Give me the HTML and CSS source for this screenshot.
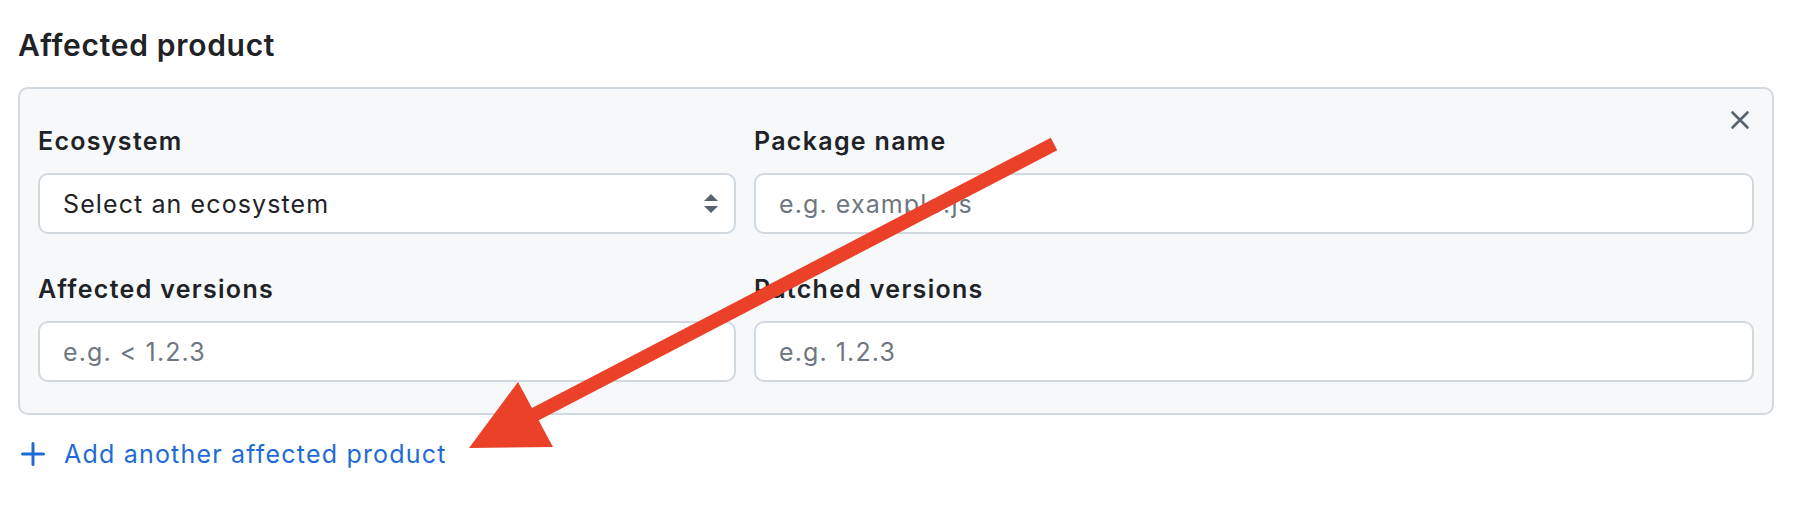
FILE: index.html
```html
<!DOCTYPE html>
<html lang="en">
<head>
  <meta charset="UTF-8">
  <meta name="viewport" content="width=device-width, initial-scale=1.0">
  <title>Affected product</title>
  <link rel="stylesheet" href="styles.css">
</head>
<body>
  <div class="page">
    <h2 class="section-title">Affected product</h2>

    <div class="product-card">
      <button class="remove-btn" aria-label="Remove affected product">
        <svg width="18" height="18" viewBox="0 0 18 18">
          <path d="M1.5 1.5 L16.5 16.5 M16.5 1.5 L1.5 16.5" stroke="#59636e" stroke-width="2.6" stroke-linecap="round" fill="none"/>
        </svg>
      </button>

      <div class="fields">
        <div class="field">
          <label for="ecosystem">Ecosystem</label>
          <div class="select-wrap">
            <select id="ecosystem" class="form-control">
              <option>Select an ecosystem</option>
              <option>npm</option>
              <option>pip</option>
              <option>Maven</option>
            </select>
            <svg class="select-arrows" width="14" height="20" viewBox="0 0 14 20">
              <path d="M7 0 L14 7 L0 7 Z M0 12 L14 12 L7 19 Z" fill="#59636e"/>
            </svg>
          </div>
        </div>

        <div class="field">
          <label for="package">Package name</label>
          <input type="text" id="package" class="form-control" placeholder="e.g. example.js">
        </div>

        <div class="field">
          <label for="affected">Affected versions</label>
          <input type="text" id="affected" class="form-control" placeholder="e.g. &lt; 1.2.3">
        </div>

        <div class="field">
          <label for="patched">Patched versions</label>
          <input type="text" id="patched" class="form-control" placeholder="e.g. 1.2.3">
        </div>
      </div>
    </div>

    <a class="add-link" href="#">
      <svg width="24" height="24" viewBox="0 0 24 24">
        <path d="M12 1.5 V22.5 M1.5 12 H22.5" stroke="currentColor" stroke-width="3" stroke-linecap="round" fill="none"/>
      </svg>
      Add another affected product
    </a>
  </div>

  <!-- annotation drawn over the form -->
  <svg class="annotation" width="1794" height="510" viewBox="0 0 1794 510">
    <line x1="1054" y1="144" x2="528" y2="418" stroke="#ea4128" stroke-width="14"/>
    <polygon points="518,382 469,448 553,447" fill="#ea4128"/>
  </svg>
</body>
</html>
```

FILE: styles.css
```css
body {
  margin: 0;
  font-family: Inter, "Noto Sans", sans-serif;
  color: #1f2328;
  background-color: #ffffff;
  position: relative;
}

.page {
  padding: 23px 20px 0 18px;
}

.section-title {
  margin: 0;
  font-size: 30px;
  font-weight: 600;
  line-height: 45px;
  letter-spacing: 0.7px;
}

.product-card {
  position: relative;
  box-sizing: border-box;
  width: 1756px;
  margin-top: 19px;
  padding: 34px 18px 31px;
  background-color: #f6f8fa;
  border: 2px solid #d1d9e0;
  border-radius: 10px;
}

.remove-btn {
  position: absolute;
  top: 22px;
  right: 23px;
  width: 18px;
  height: 18px;
  padding: 0;
  border: none;
  background: none;
  cursor: pointer;
}

.remove-btn svg {
  display: block;
}

.fields {
  display: grid;
  grid-template-columns: 698px 1fr;
  column-gap: 18px;
  row-gap: 37px;
}

.field label {
  display: block;
  font-size: 25px;
  font-weight: 600;
  line-height: 36px;
  letter-spacing: 1.3px;
  margin-bottom: 14px;
}

.form-control {
  display: block;
  width: 100%;
  height: 61px;
  box-sizing: border-box;
  padding: 0 23px;
  font-family: Inter, "Noto Sans", sans-serif;
  font-size: 25px;
  letter-spacing: 1.1px;
  color: #1f2328;
  background-color: #ffffff;
  border: 2px solid #d1d9e0;
  border-radius: 10px;
  outline: none;
}

.form-control::placeholder {
  color: #6e7781;
}

select.form-control {
  appearance: none;
  -webkit-appearance: none;
}

.select-wrap {
  position: relative;
}

.select-arrows {
  position: absolute;
  right: 18px;
  top: 21px;
  pointer-events: none;
}

.add-link {
  display: inline-flex;
  align-items: center;
  gap: 19px;
  margin-top: 21px;
  margin-left: 3px;
  font-size: 25px;
  line-height: 36px;
  letter-spacing: 1.2px;
  color: #1f6bd6;
  text-decoration: none;
}

.add-link svg {
  display: block;
}

.annotation {
  position: absolute;
  top: 0;
  left: 0;
  pointer-events: none;
}
```
